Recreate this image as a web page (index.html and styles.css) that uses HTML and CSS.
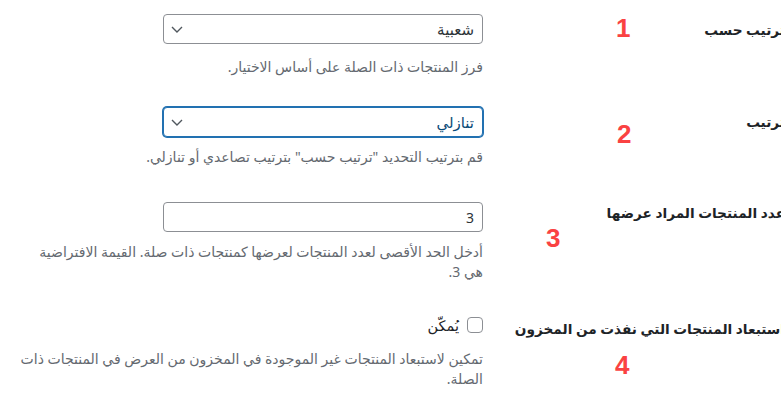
FILE: index.html
```html
<!DOCTYPE html>
<html lang="ar" dir="rtl">
<head>
<meta charset="utf-8">
<title>إعدادات المنتجات ذات الصلة</title>
<link rel="stylesheet" href="styles.css">
</head>
<body>
<div class="form">
  <div class="row row-orderby">
    <div class="th"><label for="orderby">ترتيب حسب</label></div>
    <div class="td">
      <div class="select-wrap">
        <select id="orderby" class="select"><option>شعبية</option></select>
        <svg class="chev" width="12" height="7" viewBox="0 0 12 7"><path d="M1 1l5 5 5-5" fill="none" stroke="#50575e" stroke-width="1.4"/></svg>
      </div>
      <p class="description">فرز المنتجات ذات الصلة على أساس الاختيار.</p>
    </div>
  </div>
  <div class="row row-order">
    <div class="th"><label for="order">ترتيب</label></div>
    <div class="td">
      <div class="select-wrap">
        <select id="order" class="select is-focus"><option>تنازلي</option></select>
        <svg class="chev" width="12" height="7" viewBox="0 0 12 7"><path d="M1 1l5 5 5-5" fill="none" stroke="#50575e" stroke-width="1.4"/></svg>
      </div>
      <p class="description">قم بترتيب التحديد "ترتيب حسب" بترتيب تصاعدي أو تنازلي.</p>
    </div>
  </div>
  <div class="row row-count">
    <div class="th"><label for="count">عدد المنتجات المراد عرضها</label></div>
    <div class="td">
      <input id="count" class="text-input" type="text" value="3">
      <p class="description">أدخل الحد الأقصى لعدد المنتجات لعرضها كمنتجات ذات صلة. القيمة الافتراضية هي&nbsp;3.</p>
    </div>
  </div>
  <div class="row row-stock">
    <div class="th"><label for="stock">استبعاد المنتجات التي نفذت من المخزون</label></div>
    <div class="td">
      <label class="check"><input id="stock" type="checkbox" class="checkbox"> يُمكّن</label>
      <p class="description">تمكين لاستبعاد المنتجات غير الموجودة في المخزون من العرض في المنتجات ذات الصلة.</p>
    </div>
  </div>

  <span class="mark mark-1">1</span>
  <span class="mark mark-2">2</span>
  <span class="mark mark-3">3</span>
  <span class="mark mark-4">4</span>
</div>
</body>
</html>
```

FILE: styles.css
```css
html {
  overflow: hidden;
  background: #ffffff;
}

body {
  margin: 0;
  padding: 0;
  min-height: 401px;
  font-family: "Noto Sans", "DejaVu Sans", sans-serif;
  color: #1d2327;
}

.form {
  position: relative;
  margin-left: 8px;
  margin-right: -4px;
  min-height: 401px;
}

.row {
  display: grid;
  grid-template-columns: 292px 474px;
  column-gap: 10px;
}

.th {
  padding-top: 20px;
  white-space: nowrap;
}

.th label {
  display: block;
  font-size: 13.7px;
  font-weight: 600;
  line-height: 20px;
  color: #1d2327;
}

.td {
  padding-top: 14px;
  padding-bottom: 15px;
}

.row-order .td { padding-top: 15px; padding-bottom: 17px; }
.row-count .td { padding-top: 19px; padding-bottom: 16px; }
.row-stock .td { padding-top: 20px; }
.row-stock .th { padding-top: 22px; }

.select-wrap {
  position: relative;
  width: 320px;
}

.select {
  display: block;
  width: 320px;
  height: 30px;
  margin: 0;
  padding: 0 8px 0 24px;
  border: 1px solid #8c8f94;
  border-radius: 4px;
  background: #fff;
  font-family: inherit;
  font-size: 15px;
  line-height: 28px;
  color: #2c3338;
  -webkit-appearance: none;
  appearance: none;
  outline: none;
}

.select.is-focus {
  border-color: #2271b1;
  box-shadow: 0 0 0 1px #2271b1;
  color: #0a4b78;
}

.chev {
  position: absolute;
  left: 8px;
  top: 12px;
  pointer-events: none;
}

.text-input {
  display: block;
  box-sizing: border-box;
  width: 320px;
  height: 30px;
  margin: 0;
  padding: 0 8px;
  border: 1px solid #8c8f94;
  border-radius: 4px;
  background: #fff;
  font-family: inherit;
  font-size: 14px;
  color: #2c3338;
  outline: none;
}

.description {
  margin: 13px 0 0;
  font-size: 14px;
  line-height: 19.5px;
  color: #646970;
}

.row-order .description,
.row-count .description { margin-top: 10px; }

.check {
  display: flex;
  align-items: center;
  gap: 8px;
  height: 16px;
  font-size: 14.5px;
  line-height: 20px;
  color: #1d2327;
}

.checkbox {
  -webkit-appearance: none;
  appearance: none;
  box-sizing: border-box;
  width: 16px;
  height: 16px;
  margin: 0;
  border: 1px solid #8c8f94;
  border-radius: 4px;
  background: #fff;
}

.row-stock .description { margin-top: 16px; }

.mark {
  position: absolute;
  font-family: "Liberation Sans", Arial, sans-serif;
  font-weight: 700;
  font-size: 26px;
  line-height: 26px;
  color: #fa4242;
}

.mark-1 { left: 608px; top: 15px; }
.mark-2 { left: 609px; top: 121px; }
.mark-3 { left: 538px; top: 225px; }
.mark-4 { left: 607px; top: 352px; }
```
